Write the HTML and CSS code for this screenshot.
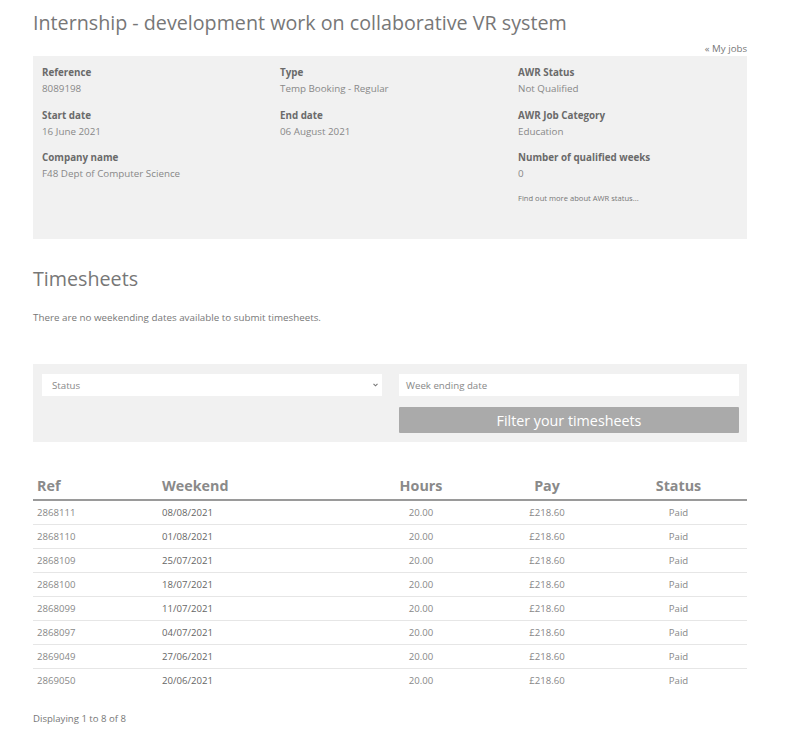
FILE: index.html
```html
<!DOCTYPE html>
<html>
<head>
<meta charset="utf-8">
<link rel="stylesheet" href="styles.css">
</head>
<body>
<div class="page">
  <h1 class="title">Internship - development work on collaborative VR system</h1>
  <div class="back"><a href="#">« My jobs</a></div>
  <div class="details">
    <div class="col">
      <div class="field"><div class="label">Reference</div><div class="value">8089198</div></div>
      <div class="field"><div class="label">Start date</div><div class="value">16 June 2021</div></div>
      <div class="field"><div class="label">Company name</div><div class="value">F48 Dept of Computer Science</div></div>
    </div>
    <div class="col">
      <div class="field"><div class="label">Type</div><div class="value">Temp Booking - Regular</div></div>
      <div class="field"><div class="label">End date</div><div class="value">06 August 2021</div></div>
    </div>
    <div class="col">
      <div class="field"><div class="label">AWR Status</div><div class="value">Not Qualified</div></div>
      <div class="field"><div class="label">AWR Job Category</div><div class="value">Education</div></div>
      <div class="field"><div class="label">Number of qualified weeks</div><div class="value">0</div></div>
      <div class="more">Find out more about AWR status...</div>
    </div>
  </div>

  <h2 class="section">Timesheets</h2>
  <p class="note">There are no weekending dates available to submit timesheets.</p>

  <div class="filter">
    <div class="fcol">
      <div class="select"><span>Status</span>
        <svg class="chev" width="5" height="4" viewBox="0 0 5 4"><path d="M0.5 0.8 L2.5 2.8 L4.5 0.8" fill="none" stroke="#777" stroke-width="1.1"/></svg>
      </div>
    </div>
    <div class="fcol">
      <div class="input">Week ending date</div>
      <div class="btn">Filter your timesheets</div>
    </div>
  </div>

  <table class="grid">
    <colgroup><col class="c1"><col class="c2"><col class="c3"><col class="c4"><col class="c5"></colgroup>
    <thead>
      <tr><th class="l">Ref</th><th class="l">Weekend</th><th>Hours</th><th>Pay</th><th>Status</th></tr>
    </thead>
    <tbody>
      <tr><td class="ref">2868111</td><td class="wk">08/08/2021</td><td>20.00</td><td>£218.60</td><td>Paid</td></tr>
      <tr><td class="ref">2868110</td><td class="wk">01/08/2021</td><td>20.00</td><td>£218.60</td><td>Paid</td></tr>
      <tr><td class="ref">2868109</td><td class="wk">25/07/2021</td><td>20.00</td><td>£218.60</td><td>Paid</td></tr>
      <tr><td class="ref">2868100</td><td class="wk">18/07/2021</td><td>20.00</td><td>£218.60</td><td>Paid</td></tr>
      <tr><td class="ref">2868099</td><td class="wk">11/07/2021</td><td>20.00</td><td>£218.60</td><td>Paid</td></tr>
      <tr><td class="ref">2868097</td><td class="wk">04/07/2021</td><td>20.00</td><td>£218.60</td><td>Paid</td></tr>
      <tr><td class="ref">2869049</td><td class="wk">27/06/2021</td><td>20.00</td><td>£218.60</td><td>Paid</td></tr>
      <tr><td class="ref">2869050</td><td class="wk">20/06/2021</td><td>20.00</td><td>£218.60</td><td>Paid</td></tr>
    </tbody>
  </table>
  <p class="count">Displaying 1 to 8 of 8</p>
</div>
</body>
</html>
```

FILE: styles.css
```css
* { box-sizing: border-box; }
body {
  margin: 0;
  background: #fff;
  font-family: "Open Sans", "Liberation Sans", sans-serif;
  color: #777;
}
.page {
  width: 714px;
  margin-left: 33px;
  padding-top: 9px;
}
.title {
  margin: 0;
  font-size: 19.7px;
  font-weight: 400;
  line-height: 28px;
  color: #777;
}
.back {
  text-align: right;
  font-size: 9.7px;
  line-height: 12px;
  margin-top: 6px;
  margin-bottom: 1px;
}
.back a { color: #777; text-decoration: none; }
.details {
  display: grid;
  grid-template-columns: repeat(3, 1fr);
  background: #f1f1f1;
  height: 183px;
  padding-top: 9px;
}
.col { padding-left: 9px; }
.field { margin-bottom: 10.5px; }
.label {
  font-size: 9.8px;
  font-weight: 700;
  line-height: 16px;
  color: #6a6a6a;
}
.value {
  font-size: 9.8px;
  line-height: 16px;
  color: #888;
}
.more {
  font-size: 7.6px;
  line-height: 10px;
  color: #777;
  margin-top: 6px;
}
.section {
  margin: 26px 0 0;
  font-size: 19.7px;
  font-weight: 400;
  line-height: 28px;
  color: #777;
}
.note {
  margin: 19px 0 0;
  font-size: 9.8px;
  line-height: 12px;
  color: #777;
}
.filter {
  display: grid;
  grid-template-columns: 1fr 1fr;
  background: #f1f1f1;
  margin-top: 40px;
  padding: 10px 0 9px;
}
.fcol { padding: 0 8px 0 9px; }
.select, .input {
  background: #fff;
  height: 22px;
  font-size: 9.7px;
  color: #888;
  display: flex;
  align-items: center;
  padding: 0 7px;
}
.select { justify-content: space-between; padding-left: 10px; padding-right: 4px; }
.btn {
  margin-top: 11px;
  height: 26px;
  background: #aaa;
  color: #fff;
  font-size: 14.3px;
  display: flex;
  align-items: center;
  justify-content: center;
  border-radius: 1px;
}
.grid {
  width: 714px;
  margin-top: 31px;
  border-collapse: collapse;
  table-layout: fixed;
}
.c1 { width: 125px; }
.c2 { width: 200px; }
.c3 { width: 126px; }
.c4 { width: 126px; }
.c5 { width: 137px; }
.grid th {
  font-size: 14.3px;
  font-weight: 700;
  color: #8a8a8a;
  height: 27px;
  padding: 0 4px 4px;
  text-align: center;
  border-bottom: 2px solid #9a9a9a;
  vertical-align: bottom;
}
.grid th.l { text-align: left; }
.grid td {
  font-size: 9.6px;
  height: 24px;
  padding: 0 4px;
  text-align: center;
  color: #888;
  border-bottom: 1px solid #e6e6e6;
}
.grid td.ref { text-align: left; color: #888; }
.grid td.wk { text-align: left; color: #666; }
.grid tbody tr:last-child td { border-bottom: none; }
.count {
  margin: 21px 0 0;
  font-size: 9.6px;
  line-height: 12px;
  color: #777;
}
```
